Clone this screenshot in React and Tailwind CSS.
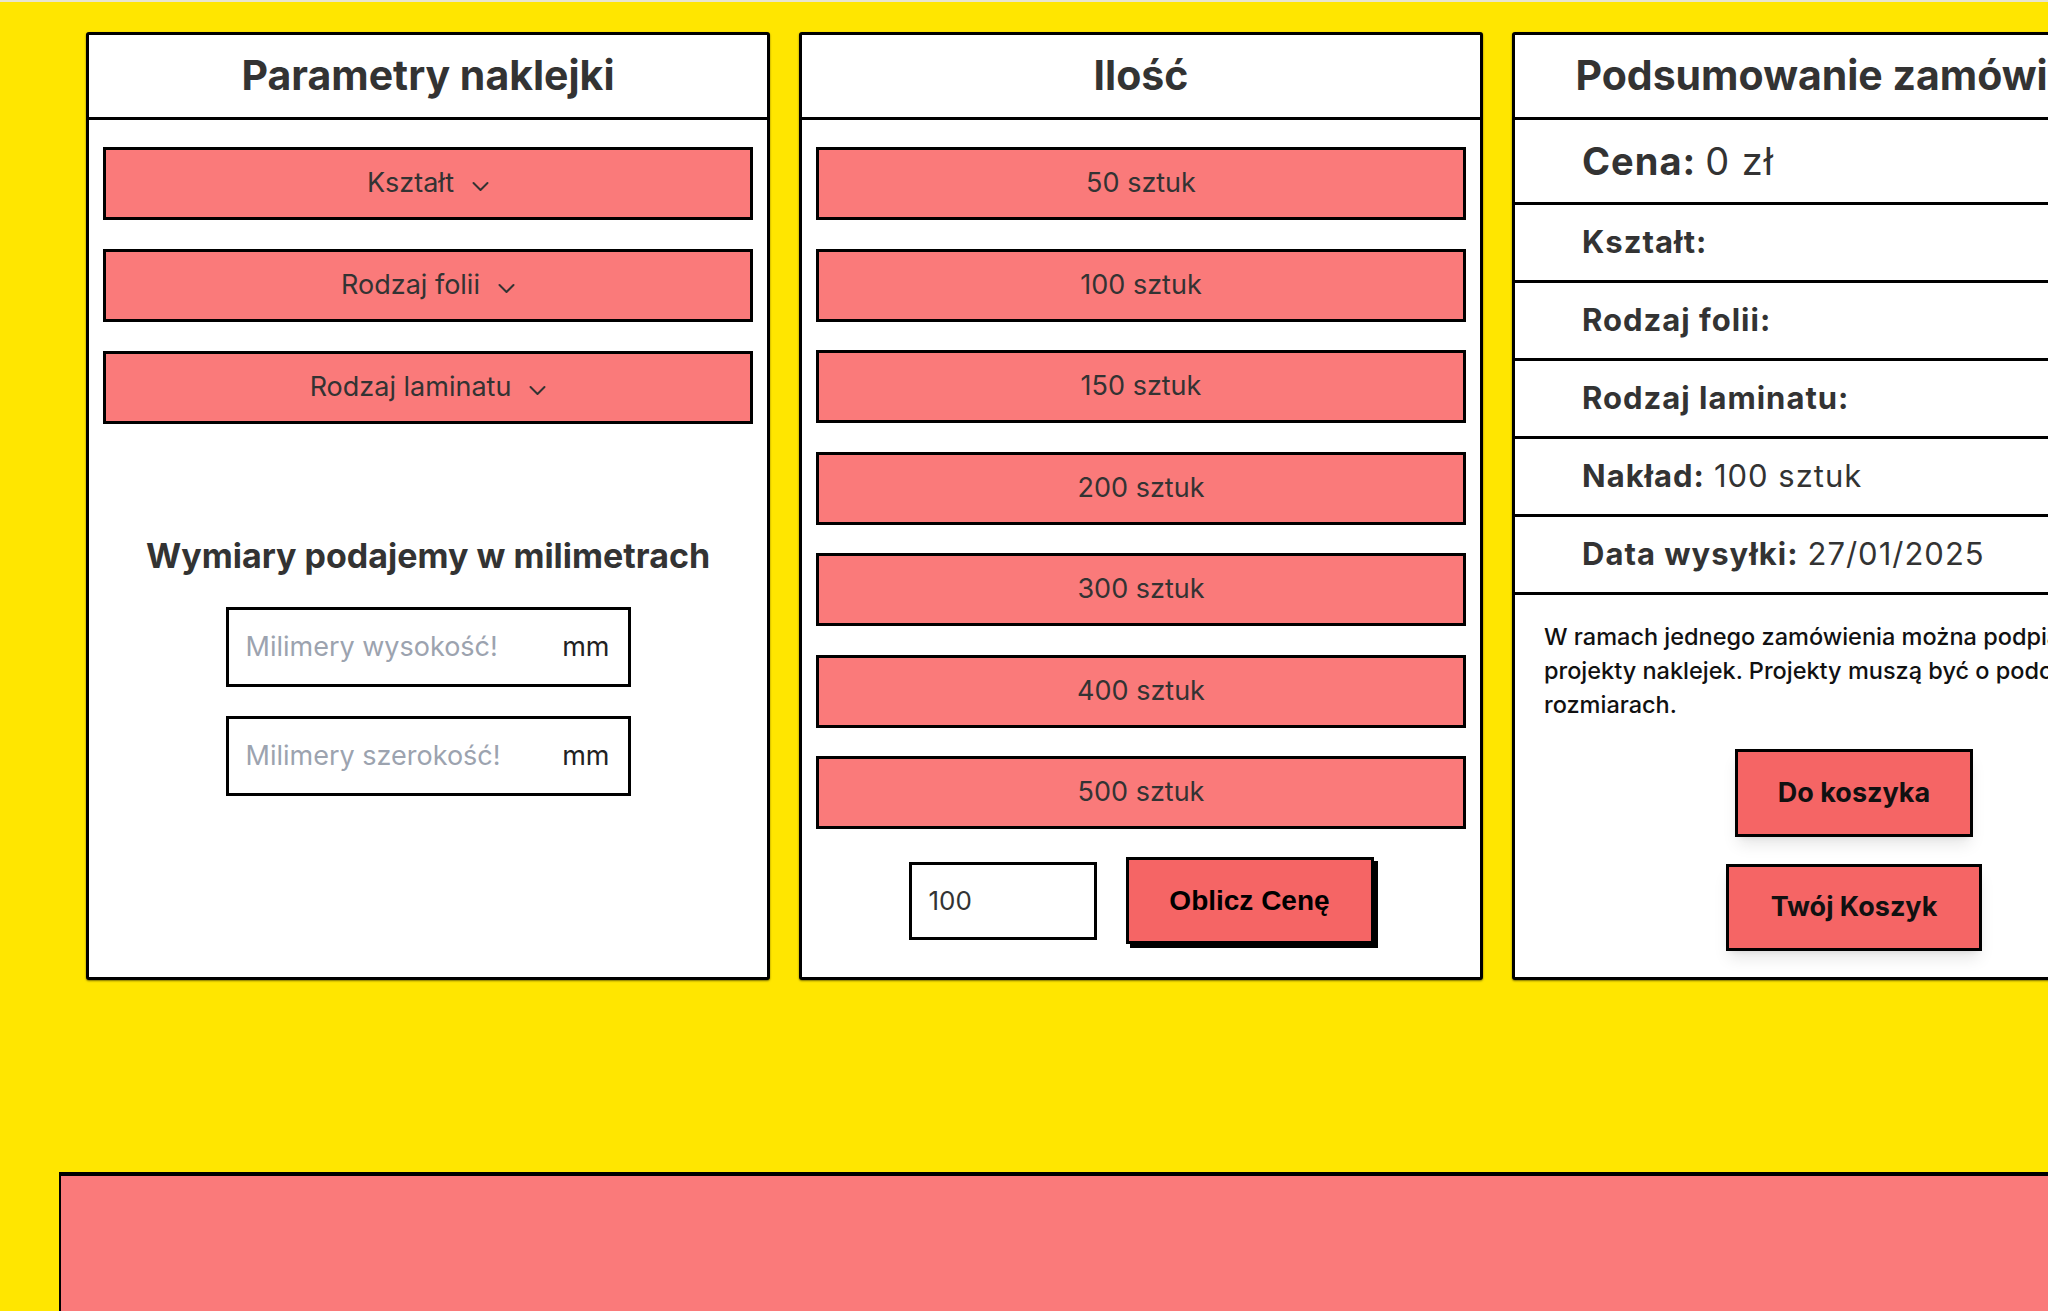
import { useState } from "react";

const QUANTITIES = [50, 100, 150, 200, 300, 400, 500];

function Chevron() {
  return (
    <svg className="ml-[18px] mt-[6px] w-[17px] h-[11px]" viewBox="0 0 17 11" fill="none" stroke="#333" strokeWidth="2" strokeLinecap="round" strokeLinejoin="round">
      <polyline points="1.5,2 8.5,9 15.5,2" />
    </svg>
  );
}

function Panel({ title, children }) {
  return (
    <div className="w-[684px] h-[948px] shrink-0 bg-white border-[3px] border-black rounded-[3px] flex flex-col shadow-[0_1px_2px_rgba(0,0,0,0.5)]">
      <div className="h-[85px] shrink-0 flex items-center justify-center border-b-[3px] border-black">
        <h2 className="text-[41px] font-bold text-[#333] whitespace-nowrap">{title}</h2>
      </div>
      {children}
    </div>
  );
}

function Dropdown({ label }) {
  return (
    <button className="h-[73px] w-full bg-[#FA7A7A] border-[3px] border-black flex items-center justify-center text-[27px] text-[#333]">
      <span>{label}</span>
      <Chevron />
    </button>
  );
}

function MmInput({ placeholder }) {
  return (
    <div className="w-[405px] h-[80px] border-[3px] border-black flex items-center pl-[17px] pr-[18px] bg-white">
      <input
        className="flex-1 min-w-0 outline-none text-[27px] text-[#333] placeholder-[#9ca3af] bg-transparent"
        placeholder={placeholder}
      />
      <span className="text-[27px] text-[#222]">mm</span>
    </div>
  );
}

function SummaryRow({ label, value, big }) {
  return (
    <div className={`${big ? "h-[85px] text-[38px]" : "h-[78px] text-[31px]"} shrink-0 flex items-center pl-[67px] border-b-[3px] border-black text-[#333] whitespace-nowrap tracking-[1px]`}>
      <span className="font-bold">{label}</span>
      {value && <span className="ml-[9px]">{value}</span>}
    </div>
  );
}

export default function App() {
  const [qty, setQty] = useState("100");

  return (
    <div className="h-screen w-full overflow-hidden bg-[#FFE600]" style={{ fontFamily: "Inter, 'Noto Sans', sans-serif" }}>
      <div className="h-[2px] bg-[#e8e5cf]" />

      <div className="flex gap-[29px] pl-[86px] pt-[30px]">
        {/* Parametry */}
        <Panel title="Parametry naklejki">
          <div className="flex flex-col items-center px-[14px] pt-[27px]">
            <div className="w-full flex flex-col gap-[29px]">
              <Dropdown label="Kształt" />
              <Dropdown label="Rodzaj folii" />
              <Dropdown label="Rodzaj laminatu" />
            </div>
            <h3 className="mt-[112px] text-[34px] leading-[40px] font-bold text-[#333] whitespace-nowrap">
              Wymiary podajemy w milimetrach
            </h3>
            <div className="mt-[31px] flex flex-col gap-[29px]">
              <MmInput placeholder="Milimery wysokość!" />
              <MmInput placeholder="Milimery szerokość!" />
            </div>
          </div>
        </Panel>

        {/* Ilość */}
        <Panel title="Ilość">
          <div className="flex flex-col px-[14px] pt-[27px]">
            <div className="flex flex-col gap-[28.5px]">
              {QUANTITIES.map((q) => (
                <button
                  key={q}
                  onClick={() => setQty(String(q))}
                  className="h-[73px] w-full bg-[#FA7A7A] border-[3px] border-black text-[27px] text-[#333]"
                >
                  {q} sztuk
                </button>
              ))}
            </div>
            <div className="mt-[28px] flex items-center justify-center gap-[29px]">
              <input
                value={qty}
                onChange={(e) => setQty(e.target.value)}
                className="w-[188px] h-[78px] border-[3px] border-black pl-[17px] text-[26px] text-[#333] outline-none"
              />
              <button
                className="w-[248px] h-[87px] bg-[#F56565] border-[3px] border-black shadow-[4px_4px_0_#000] text-[28px] font-bold text-black"
                style={{ fontFamily: "'Liberation Sans', Arial, sans-serif" }}
              >
                Oblicz Cenę
              </button>
            </div>
          </div>
        </Panel>

        {/* Podsumowanie */}
        <Panel title="Podsumowanie zamówienia">
          <SummaryRow big label="Cena:" value="0 zł" />
          <SummaryRow label="Kształt:" />
          <SummaryRow label="Rodzaj folii:" />
          <SummaryRow label="Rodzaj laminatu:" />
          <SummaryRow label="Nakład:" value="100 sztuk" />
          <SummaryRow label="Data wysyłki:" value="27/01/2025" />
          <div className="flex flex-col items-center px-[29px] pt-[25px]">
            <p className="text-[23.5px] leading-[34px] font-medium text-[#111]">
              W ramach jednego zamówienia można podpiąć różne projekty naklejek. Projekty muszą być o podobnych rozmiarach.
            </p>
            <button className="mt-[27px] h-[88px] px-[40px] bg-[#F56565] border-[3px] border-black shadow-lg text-[27px] font-bold text-[#111]">
              Do koszyka
            </button>
            <button className="mt-[27px] h-[87px] px-[42px] bg-[#F56565] border-[3px] border-black shadow-lg text-[27px] font-bold text-[#111]">
              Twój Koszyk
            </button>
          </div>
        </Panel>
      </div>

      <div className="ml-[59px] mt-[192px] h-[300px] w-[2100px] bg-[#FA7A7A] border-t-[4px] border-l-2 border-black" />
    </div>
  );
}
